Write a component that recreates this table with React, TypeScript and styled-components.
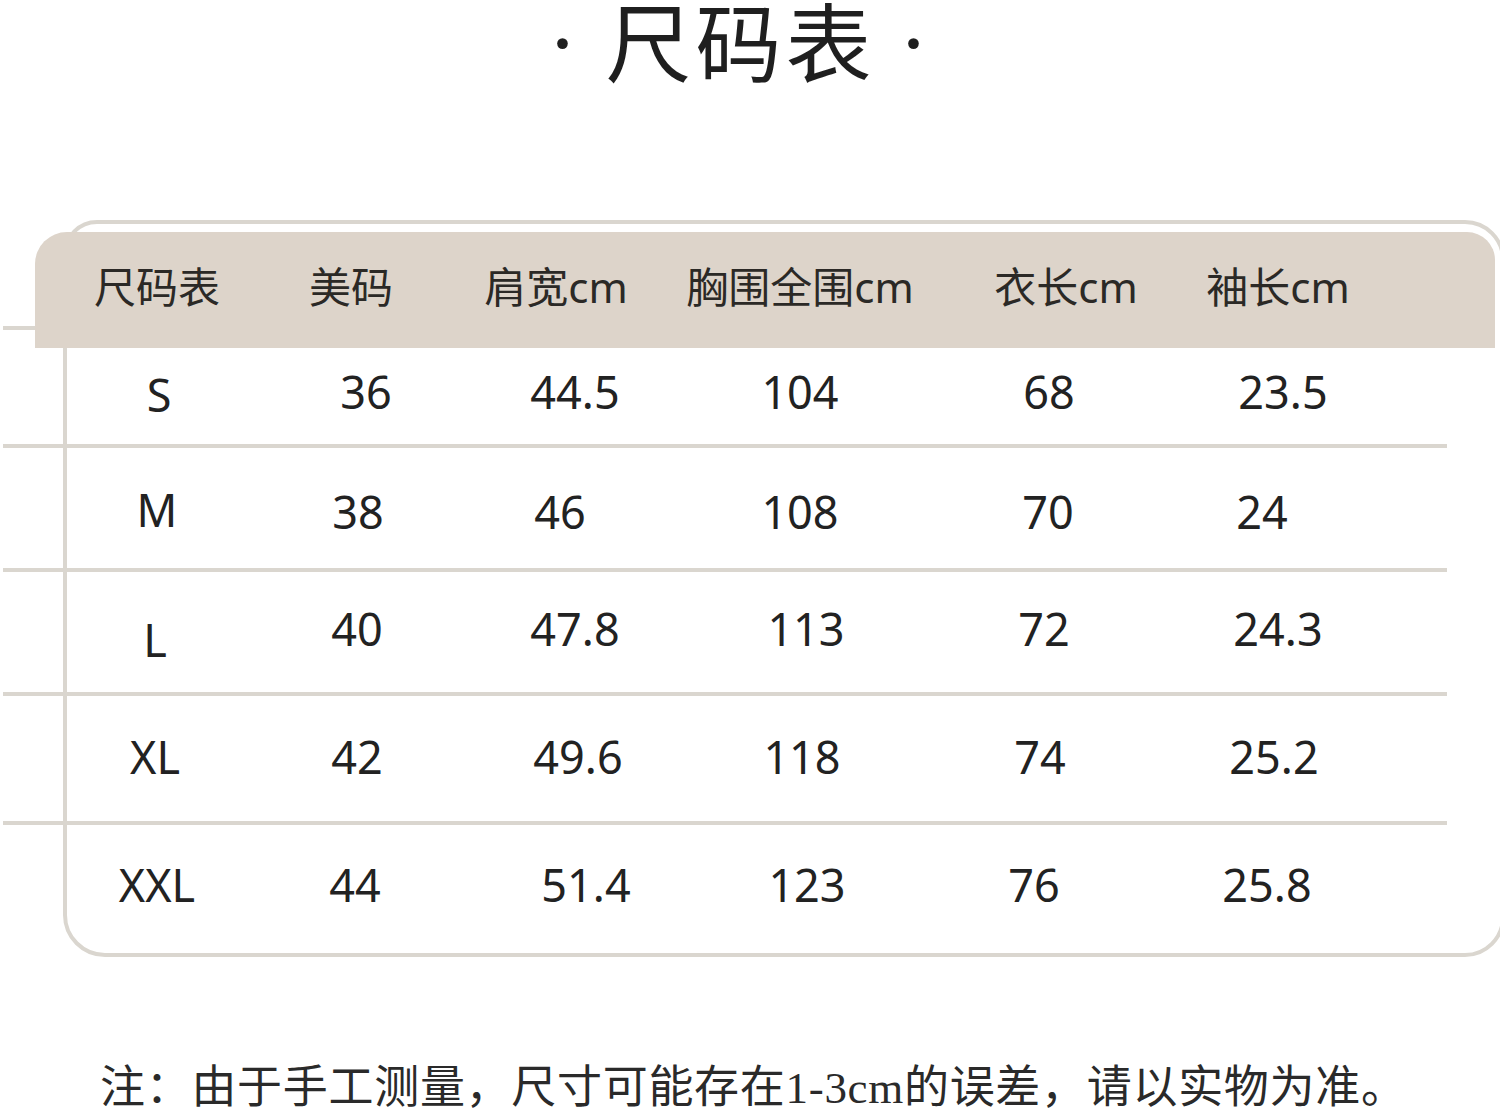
import React from "react";
import styled, { createGlobalStyle } from "styled-components";

const GlobalStyle = createGlobalStyle`
  html, body {
    margin: 0;
    padding: 0;
    background: #ffffff;
    overflow-x: hidden;
  }
  * { box-sizing: border-box; }
`;

const LINE = "#dad6cf";
const COLS = "184px 212px 218px 246px 240px 220px";

const Page = styled.div`
  width: 1500px;
  height: 1118px;
  overflow: hidden;
  background: #ffffff;
`;

const TitleRow = styled.h1`
  margin: 0;
  height: 78px;
  display: flex;
  align-items: center;
  justify-content: center;
  gap: 38px;
  padding-right: 34px;
  font-family: "Noto Sans CJK SC", "Noto Sans", sans-serif;
  font-weight: 400;
  font-size: 86px;
  line-height: 78px;
  color: #1f1f1f;
`;

const TitleText = styled.span`
  letter-spacing: 4px;
  margin-right: -15px;
`;

const Dot = styled.span`
  font-family: "Liberation Serif", serif;
  font-size: 90px;
  line-height: 78px;
  width: 20px;
  text-align: center;
  color: #1f1f1f;
  padding-top: 10px;
`;

const Frame = styled.section`
  margin: 142px 0 0 63px;
  width: 1442px;
  height: 737px;
  border: 4px solid ${LINE};
  border-radius: 34px 40px 40px 42px;
  display: flex;
  flex-direction: column;
`;

const HeaderRow = styled.div`
  display: flex;
  align-items: flex-start;
  margin: 8px 6px 0 -64px;
`;

const Stub = styled.div`
  width: 32px;
  height: 98px;
  border-bottom: 4px solid ${LINE};
  flex: none;
`;

const HeaderBar = styled.div`
  flex: 1;
  height: 116px;
  background: #ddd4ca;
  border-radius: 32px 28px 0 0;
  padding: 0 0 6px 30px;
  display: grid;
  grid-template-columns: ${COLS};
  align-items: center;
  font-family: "Noto Sans", "Noto Sans CJK SC", sans-serif;
  font-size: 42px;
  color: #2b2926;
`;

const Row = styled.div<{ $h: number; $last?: boolean }>`
  display: grid;
  grid-template-columns: ${COLS};
  align-items: center;
  height: ${(p) => p.$h + (p.$last ? 0 : 4)}px;
  margin: 0 54px 0 -64px;
  padding-left: 62px;
  border-bottom: ${(p) => (p.$last ? "none" : `4px solid ${LINE}`)};
  font-family: "Noto Sans", "Noto Sans CJK SC", sans-serif;
  font-size: 45px;
  color: #222222;
`;

const Cell = styled.div<{ $dx: number; $dy: number }>`
  display: flex;
  justify-content: center;
  align-items: center;
  white-space: nowrap;
  line-height: 1.2;
  padding-left: ${(p) => Math.max(0, 2 * p.$dx)}px;
  padding-right: ${(p) => Math.max(0, -2 * p.$dx)}px;
  padding-top: ${(p) => Math.max(0, 2 * p.$dy)}px;
  padding-bottom: ${(p) => Math.max(0, -2 * p.$dy)}px;
`;

const Note = styled.p`
  margin: 101px 0 0 100px;
  height: 60px;
  line-height: 60px;
  font-family: "Liberation Serif", "Noto Sans CJK SC", serif;
  font-size: 45px;
  letter-spacing: 0.7px;
  color: #2a2a2a;
  white-space: nowrap;
`;

const headers: { label: string; dx: number }[] = [
  { label: "尺码表", dx: 0 },
  { label: "美码", dx: -4 },
  { label: "肩宽cm", dx: -14 },
  { label: "胸围全围cm", dx: -2 },
  { label: "衣长cm", dx: 21 },
  { label: "袖长cm", dx: 3 },
];

type RowData = {
  h: number;
  dy: number;
  cells: { v: string; dx: number; dy?: number }[];
};

const rows: RowData[] = [
  {
    h: 96,
    dy: -4,
    cells: [
      { v: "S", dx: 2, dy: 3 },
      { v: "36", dx: 11 },
      { v: "44.5", dx: 5 },
      { v: "104", dx: -2 },
      { v: "68", dx: 4 },
      { v: "23.5", dx: 8 },
    ],
  },
  {
    h: 120,
    dy: 4,
    cells: [
      { v: "M", dx: 0, dy: -2 },
      { v: "38", dx: 3 },
      { v: "46", dx: -10 },
      { v: "108", dx: -2 },
      { v: "70", dx: 3 },
      { v: "24", dx: -13 },
    ],
  },
  {
    h: 120,
    dy: -3,
    cells: [
      { v: "L", dx: -2, dy: 11 },
      { v: "40", dx: 2 },
      { v: "47.8", dx: 5 },
      { v: "113", dx: 4 },
      { v: "72", dx: -1 },
      { v: "24.3", dx: 3 },
    ],
  },
  {
    h: 125,
    dy: -2,
    cells: [
      { v: "XL", dx: -2 },
      { v: "42", dx: 2 },
      { v: "49.6", dx: 8 },
      { v: "118", dx: 0 },
      { v: "74", dx: -5 },
      { v: "25.2", dx: -1 },
    ],
  },
  {
    h: 128,
    dy: -4,
    cells: [
      { v: "XXL", dx: 0 },
      { v: "44", dx: 0 },
      { v: "51.4", dx: 16 },
      { v: "123", dx: 5 },
      { v: "76", dx: -11 },
      { v: "25.8", dx: -8 },
    ],
  },
];

export default function App() {
  return (
    <Page>
      <GlobalStyle />
      <TitleRow>
        <Dot>·</Dot>
        <TitleText>尺码表</TitleText>
        <Dot>·</Dot>
      </TitleRow>
      <Frame>
        <HeaderRow>
          <Stub />
          <HeaderBar>
            {headers.map((h) => (
              <Cell key={h.label} $dx={h.dx} $dy={0}>
                {h.label}
              </Cell>
            ))}
          </HeaderBar>
        </HeaderRow>
        {rows.map((r, i) => (
          <Row key={i} $h={r.h} $last={i === rows.length - 1}>
            {r.cells.map((c, j) => (
              <Cell key={j} $dx={c.dx} $dy={r.dy + (c.dy ?? 0)}>
                {c.v}
              </Cell>
            ))}
          </Row>
        ))}
      </Frame>
      <Note>注：由于手工测量，尺寸可能存在1-3cm的误差，请以实物为准。</Note>
    </Page>
  );
}
